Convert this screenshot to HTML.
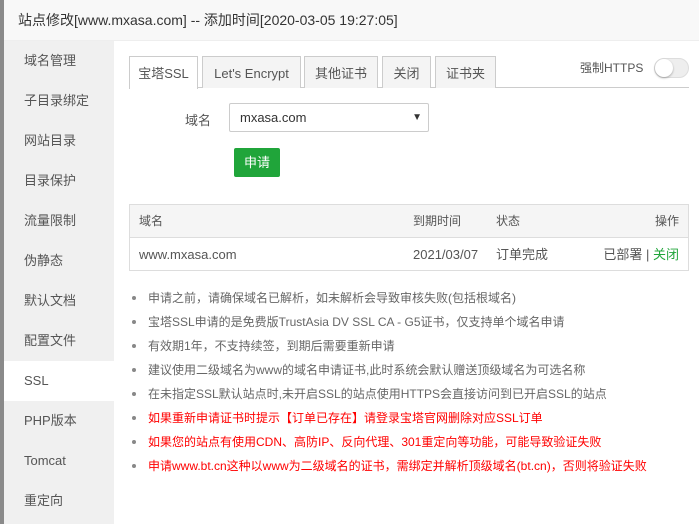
<!DOCTYPE html>
<html><head><meta charset="utf-8"><style>
*{margin:0;padding:0;box-sizing:border-box}
body{width:699px;height:524px;overflow:hidden;background:#fff;font-family:"Liberation Sans","Noto Sans CJK SC",sans-serif;font-size:12px;color:#555;position:relative}
.strip{position:absolute;left:0;top:0;width:4px;height:524px;background:#8a8a8a}
.title{position:absolute;left:4px;top:0;width:695px;height:41px;background:#f8f8f8;border-bottom:1px solid #eee;font-size:14px;color:#333;line-height:41px;padding-left:14px}
.side{position:absolute;left:4px;top:41px;width:110px;height:483px;background:#f0f0f0}
.side div{height:40px;line-height:40px;padding-left:20px;font-size:13px;color:#555}
.side .on{background:#fff}
.tabs{position:absolute;left:129px;top:56px;width:560px;height:32px;border-bottom:1px solid #ccc}
.tab{position:absolute;top:0;height:32px;border:1px solid #ccc;border-bottom:none;background:#f4f4f4;line-height:33px;text-align:center;font-size:13px;color:#555;white-space:nowrap}
.tab.on{background:#fff;height:33px}
.abs{position:absolute}
.sel{left:229px;top:103px;width:200px;height:29px;border:1px solid #ccc;border-radius:2px;line-height:27px;padding-left:10px;font-size:13px;color:#333}
.btn{left:234px;top:148px;width:46px;height:29px;background:#20a53a;border-radius:2px;color:#fff;text-align:center;line-height:29px;font-size:13px}
.tbl{left:129px;top:204px;width:560px;height:67px;border:1px solid #ddd}
.th{height:33px;background:#f5f5f5;border-bottom:1px solid #ddd;position:relative}
.tr{height:33px;position:relative}
.th span,.tr span{position:absolute;top:0;line-height:33px}
ul{position:absolute;left:131px;top:286px;list-style:none}
li{height:24px;line-height:24px;font-size:12px;color:#666;padding-left:17px;position:relative}
li:before{content:"";position:absolute;left:1px;top:10px;width:4px;height:4px;border-radius:50%;background:#888}
li.r{color:#f00}
</style></head><body>
<div class="strip"></div>
<div class="title">站点修改[www.mxasa.com] -- 添加时间[2020-03-05 19:27:05]</div>
<div class="side">
<div>域名管理</div><div>子目录绑定</div><div>网站目录</div><div>目录保护</div><div>流量限制</div><div>伪静态</div><div>默认文档</div><div>配置文件</div><div class="on">SSL</div><div>PHP版本</div><div>Tomcat</div><div>重定向</div>
</div>
<div class="tabs">
<div class="tab on" style="left:0;width:69px">宝塔SSL</div>
<div class="tab" style="left:73px;width:99px">Let's Encrypt</div>
<div class="tab" style="left:175px;width:74px">其他证书</div>
<div class="tab" style="left:253px;width:49px">关闭</div>
<div class="tab" style="left:306px;width:61px">证书夹</div>
</div>
<div class="abs" style="left:580px;top:60px;font-size:12px;color:#555;line-height:16px">强制HTTPS</div>
<div class="abs" style="left:654px;top:58px;width:35px;height:20px;border-radius:10px;background:#eee;border:1px solid #ddd"><div style="position:absolute;left:0;top:0;width:18px;height:18px;border-radius:50%;background:#fff;box-shadow:0 1px 2px rgba(0,0,0,.3)"></div></div>
<div class="abs" style="left:185px;top:110px;font-size:13px;color:#555">域名</div>
<div class="abs sel">mxasa.com<span style="position:absolute;right:6px;top:0;font-size:10px;color:#333">▼</span></div>
<div class="abs btn">申请</div>
<div class="abs tbl">
<div class="th"><span style="left:9px">域名</span><span style="left:283px">到期时间</span><span style="left:366px">状态</span><span style="right:9px">操作</span></div>
<div class="tr"><span style="left:9px;font-size:13px">www.mxasa.com</span><span style="left:283px;font-size:13px">2021/03/07</span><span style="left:366px;font-size:13px">订单完成</span><span style="right:9px;font-size:13px">已部署 | <b style="font-weight:normal;color:#20a53a">关闭</b></span></div>
</div>
<ul>
<li>申请之前，请确保域名已解析，如未解析会导致审核失败(包括根域名)</li>
<li>宝塔SSL申请的是免费版TrustAsia DV SSL CA - G5证书，仅支持单个域名申请</li>
<li>有效期1年，不支持续签，到期后需要重新申请</li>
<li>建议使用二级域名为www的域名申请证书,此时系统会默认赠送顶级域名为可选名称</li>
<li>在未指定SSL默认站点时,未开启SSL的站点使用HTTPS会直接访问到已开启SSL的站点</li>
<li class="r">如果重新申请证书时提示【订单已存在】请登录宝塔官网删除对应SSL订单</li>
<li class="r">如果您的站点有使用CDN、高防IP、反向代理、301重定向等功能，可能导致验证失败</li>
<li class="r">申请www.bt.cn这种以www为二级域名的证书，需绑定并解析顶级域名(bt.cn)，否则将验证失败</li>
</ul>
</body></html>
